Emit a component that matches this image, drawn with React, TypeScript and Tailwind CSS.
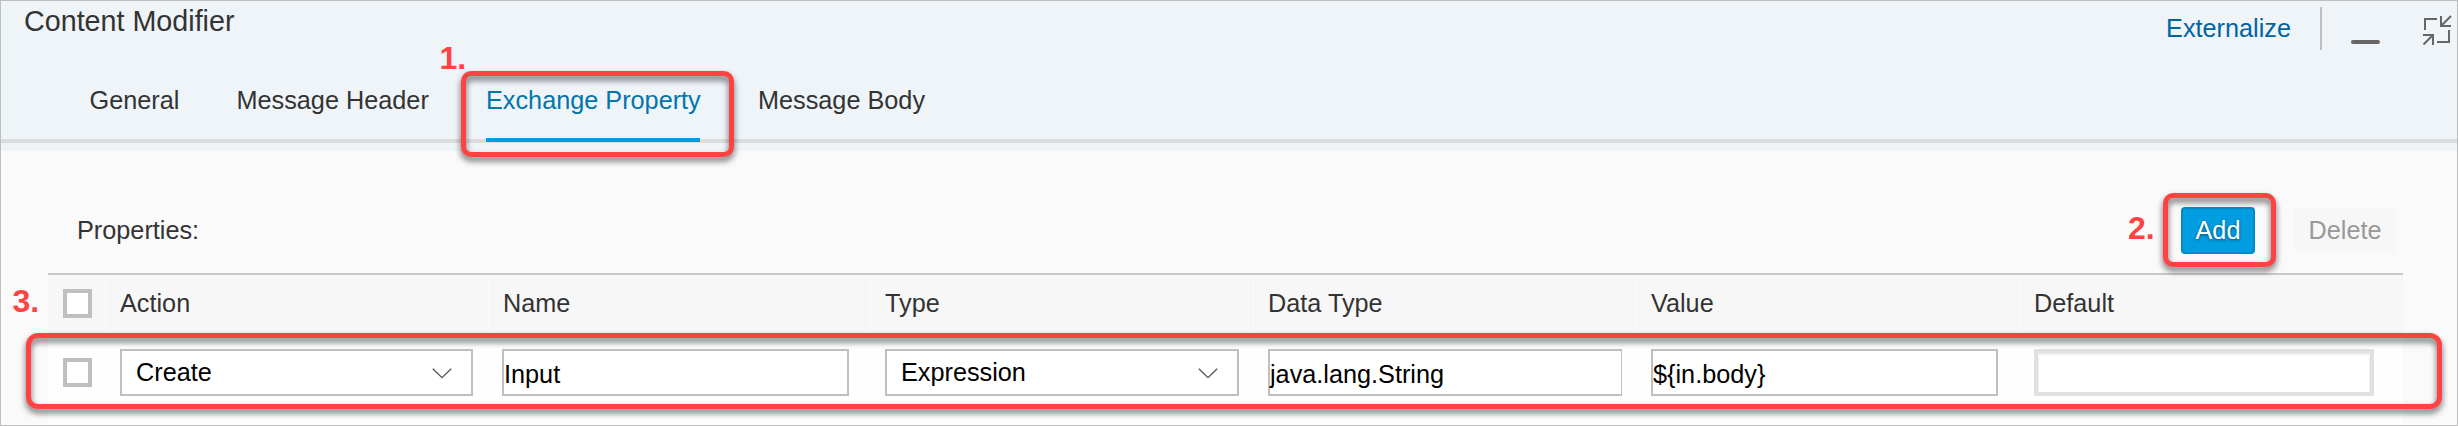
import type { ReactNode } from "react";

function Checkbox() {
  return <span className="block size-[29px] border-4 border-[#bfbfbf] bg-white" />;
}

function Chevron() {
  return (
    <svg width="20" height="11" viewBox="0 0 20 11" className="mt-0.5" fill="none" stroke="#555" strokeWidth="1.3">
      <path d="M0.8 0.8 L10 9.7 L19.2 0.8" />
    </svg>
  );
}

function Select({ className, children }: { className: string; children: ReactNode }) {
  return (
    <div className={`flex h-[47px] items-center justify-between border-2 border-[#bfbfbf] bg-white pl-[14px] pr-[19px] text-black ${className}`}>
      <span className="-mt-px leading-[28px]">{children}</span>
      <Chevron />
    </div>
  );
}

function TextField({ className, children }: { className: string; children: ReactNode }) {
  return (
    <div className={`flex h-[47px] items-center border-2 border-[#bfbfbf] bg-white text-black ${className}`}>
      <span className="mt-[3px] leading-[28px]">{children}</span>
    </div>
  );
}

const columns = ["Action", "Name", "Type", "Data Type", "Value", "Default"];

const grid = "grid grid-cols-[57px_383px_382px_383px_383px_383px_384px]";

export default function App() {
  return (
    <div className="relative flex h-[426px] w-[2458px] flex-col overflow-hidden border border-[#bebebe] bg-[#fafafa] font-['Liberation_Sans',Arial,sans-serif] text-[25.25px] text-[#333]">
      <header className="flex h-[150px] flex-col bg-[#eff4f9]">
        <div className="flex h-[60px] items-start justify-between pl-[23px]">
          <h1 className="mt-[4px] text-[28.7px] leading-[32px]">Content Modifier</h1>
          <div className="flex items-start">
            <a className="mt-[13px] leading-[28px] text-[#0064a0]">Externalize</a>
            <span className="mt-[6px] ml-[29px] h-[43px] w-0.5 bg-[#bfbfbf]" />
            <span className="mt-[39px] ml-[29px] h-1 w-[29px] rounded-full bg-[#666]" />
            <svg width="30" height="30" viewBox="0 0 30 30" className="mt-[14px] mr-[5px] ml-[42px]" fill="none" stroke="#666" strokeWidth="2">
              <path d="M3 15V4H15M27 15V27H15" />
              <path d="M19 1V11H29M19.5 10.5L29 1" />
              <path d="M1 20H11V30M10.5 20.5L1.5 29.5" />
            </svg>
          </div>
        </div>
        <nav className="flex h-[78px] items-start pt-[25px] pl-[88.5px] leading-[28px]">
          <span className="w-[147px]">General</span>
          <span className="w-[249.5px]">Message Header</span>
          <span className="flex h-[56px] w-[214px] flex-col justify-between text-[#0076ad]">
            <span className="whitespace-nowrap">Exchange Property</span>
            <span className="relative h-1 bg-[#009de0]" />
          </span>
          <span className="ml-[58px]">Message Body</span>
        </nav>
        <div className="h-1 bg-[#dcdcdc]" />
      </header>

      <main className="flex grow flex-col pl-[47px]">
        <div className="flex h-[122px] items-start pt-[56px]">
          <span className="mt-[9px] ml-[29px] leading-[28px]">Properties:</span>
          <button className="mr-[39px] ml-auto h-[47px] w-[74px] rounded-[4px] border-2 border-[#008bc9] bg-[#009de0] pb-px leading-[28px] text-white [text-shadow:0_1px_3px_rgba(0,0,0,0.5)]">
            Add
          </button>
          <button className="mr-[61px] h-[45px] w-[102px] rounded-[3px] bg-[#f7f7f7] pt-px leading-[28px] text-[#999]">
            Delete
          </button>
        </div>

        <div className={`h-[62px] w-[2355px] border-t-2 border-[#c8c8c8] bg-[#f7f7f7] ${grid}`}>
          <div className="flex items-start pt-[14px] pl-[15px]">
            <Checkbox />
          </div>
          {columns.map((name) => (
            <div key={name} className="border-l border-[#fcfcfc] pt-[14px] pl-[14px] leading-[28px]">
              {name}
            </div>
          ))}
        </div>

        <div className={`w-[2355px] grow bg-[#fefefe] pt-[14px] ${grid}`}>
          <div className="pt-[9px] pl-[15px]">
            <Checkbox />
          </div>
          <div className="pl-[15px]">
            <Select className="w-[353px]">Create</Select>
          </div>
          <div className="pl-[14px]">
            <TextField className="w-[347px]">Input</TextField>
          </div>
          <div className="pl-[15px]">
            <Select className="w-[354px]">Expression</Select>
          </div>
          <div className="pl-[15px]">
            <TextField className="w-[354px] border-r">java.lang.String</TextField>
          </div>
          <div className="pl-[15px]">
            <TextField className="w-[347px]">{"${in.body}"}</TextField>
          </div>
          <div className="pl-[15px]">
            <div className="h-[47px] w-[340px] border-4 border-[#e0e0e0] bg-white">
              <div className="h-full border-x border-t-2 border-[#f0f0f0]" />
            </div>
          </div>
        </div>
      </main>

      <div className="absolute top-[69.5px] left-[459.5px] h-[86px] w-[273px] rounded-[10px] border-[5px] border-[#ff4343] drop-shadow-[0_4px_3px_rgba(0,0,0,0.6)]" />
      <div className="absolute top-[191.5px] left-[2161.5px] h-[74px] w-[113px] rounded-[10px] border-[5px] border-[#ff4343] drop-shadow-[0_4px_3px_rgba(0,0,0,0.6)]" />
      <div className="absolute top-[331.5px] left-[24.5px] h-[76px] w-[2416px] rounded-[12px] border-[5px] border-[#ff4343] drop-shadow-[0_4px_3px_rgba(0,0,0,0.6)]" />
      <span className="absolute top-[39px] left-[438.5px] text-[32px] leading-[36px] font-bold text-[#ff4343]">1.</span>
      <span className="absolute top-[209px] left-[2127px] text-[32px] leading-[36px] font-bold text-[#ff4343]">2.</span>
      <span className="absolute top-[282px] left-[11.5px] text-[32px] leading-[36px] font-bold text-[#ff4343]">3.</span>
    </div>
  );
}
